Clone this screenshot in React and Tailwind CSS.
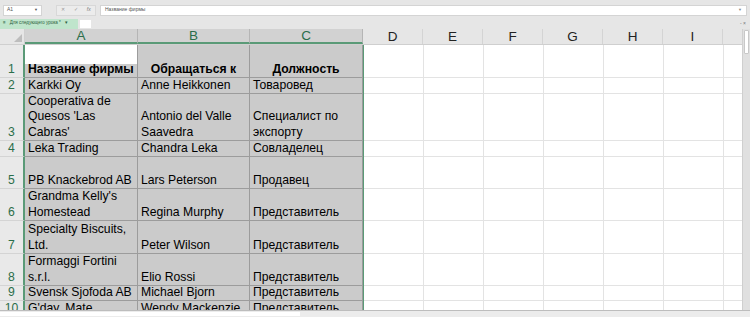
import React from "react";

const cols = [
  { key: "A", w: "w-[113px]", sel: true },
  { key: "B", w: "w-[112px]", sel: true },
  { key: "C", w: "w-[113px]", sel: true },
  { key: "D", w: "w-[60px]" },
  { key: "E", w: "w-[60px]" },
  { key: "F", w: "w-[60px]" },
  { key: "G", w: "w-[60px]" },
  { key: "H", w: "w-[60px]" },
  { key: "I", w: "w-[60px]" },
];

const rows = [
  { n: 1, h: "h-[33px]", cells: ["Название фирмы", "Обращаться к", "Должность"], head: true },
  { n: 2, h: "h-[16px]", cells: ["Karkki Oy", "Anne Heikkonen", "Товаровед"] },
  { n: 3, h: "h-[47px]", cells: [["Cooperativa de", "Quesos 'Las", "Cabras'"], ["Antonio del Valle", "Saavedra"], ["Специалист по", "экспорту"]] },
  { n: 4, h: "h-[16px]", cells: ["Leka Trading", "Chandra Leka", "Совладелец"] },
  { n: 5, h: "h-[32px]", cells: ["PB Knackebrod AB", "Lars Peterson", "Продавец"] },
  { n: 6, h: "h-[32px]", cells: [["Grandma Kelly's", "Homestead"], "Regina Murphy", "Представитель"] },
  { n: 7, h: "h-[33px]", cells: [["Specialty Biscuits,", "Ltd."], "Peter Wilson", "Представитель"] },
  { n: 8, h: "h-[32px]", cells: [["Formaggi Fortini", "s.r.l."], "Elio Rossi", "Представитель"] },
  { n: 9, h: "h-[15px]", cells: ["Svensk Sjofoda AB", "Michael Bjorn", "Представитель"] },
  { n: 10, h: "h-[32px]", cells: [["G'day, Mate"], ["Wendy Mackenzie"], ["Представитель"]], top: true },
];

const Cell = ({ value, col, head, top }) => {
  const lines = Array.isArray(value) ? value : [value];
  const align = head && col > 0 ? "items-center" : "items-start";
  return (
    <div
      className={`${cols[col].w} shrink-0 relative flex flex-col ${top ? "justify-start" : "justify-end"} ${align} px-[3px] bg-[#cbcbcb] border-r border-b border-[#9c9c9c] overflow-hidden`}
    >
      {head && col === 0 && <div className="absolute left-0 right-0 top-0 h-[19px] bg-white" />}
      {lines.map((l, i) => (
        <div key={i} className={`relative leading-[15.5px] whitespace-nowrap ${head ? "font-bold" : ""}`}>
          {l}
        </div>
      ))}
    </div>
  );
};

export default function App() {
  return (
    <div className="w-[750px] h-[317px] overflow-hidden bg-[#e6e6e6] text-[12.2px] text-black" style={{ fontFamily: "'Liberation Sans', Arial, sans-serif" }}>
      {/* formula bar */}
      <div className="h-[18px] flex items-center gap-[4px] px-[3px] pt-[2px] text-[5px] text-[#555]">
        <div className="w-[39px] h-[11px] bg-white border border-[#d4d4d4] flex items-center justify-between px-[3px]">
          <span>A1</span>
          <span className="text-[4px]">▼</span>
        </div>
        <div className="w-[6px]" />
        <div className="w-[40px] h-[11px] bg-[#ececec] border border-[#d8d8d8] flex items-center justify-around text-[#999]">
          <span>✕</span>
          <span>✓</span>
          <span className="italic text-[#777]">fx</span>
        </div>
        <div className="flex-1 h-[11px] bg-white border border-[#d4d4d4] flex items-center px-[4px] justify-between">
          <span>Название фирмы</span>
          <span className="text-[4px] text-[#888]">▼</span>
        </div>
      </div>
      {/* sheet tabs */}
      <div className="h-[11px] flex items-center gap-[2px] relative">
        <div className="w-[78px] h-[10px] bg-[#bfe5cc] flex items-center gap-[4px] px-[3px] text-[4.5px] text-[#2d5d3c] whitespace-nowrap">
          <span>≡</span>
          <span>Для следующего урока *</span>
          <span>▾</span>
        </div>
        <div className="w-[11px] h-[8px] bg-white" />
        <div className="absolute right-[4px] top-[2px] text-[5px] text-[#777]">- ×</div>
      </div>
      {/* grid */}
      <div className="flex h-[281px] overflow-hidden">
        <div className="w-[742px] bg-white">
          {/* column headers */}
          <div className="flex h-[16px] bg-[#e6e6e6] border-b border-[#cfcfcf]">
            <div className="w-[25px] shrink-0 border-r border-[#cfcfcf] relative overflow-hidden">
              <div className="absolute right-[2px] bottom-[2px] w-0 h-0 border-l-[8px] border-l-transparent border-b-[8px] border-b-[#bdbdbd]" />
            </div>
            {cols.map((c) => (
              <div
                key={c.key}
                className={`${c.w} shrink-0 flex items-center justify-center border-r ${c.sel ? "bg-[#d2d2d2] text-[#2b6e4a] border-[#b5b5b5] border-b-2 border-b-[#5a9a77]" : "text-[#222] border-[#d4d4d4]"} text-[13.5px] leading-[14px]`}
              >
                {c.key}
              </div>
            ))}
            <div className="flex-1" />
          </div>
          {rows.map((r) => (
            <div key={r.n} className={`flex ${r.h}`}>
              <div className={`w-[25px] shrink-0 bg-[#e9e9e9] border-r-2 border-r-[#5a9a77] border-b border-b-[#d4d4d4] flex ${r.top ? "items-start" : "items-end"} justify-center text-[#2b6e4a] leading-[15.5px]`}>
                {r.n}
              </div>
              {r.cells.map((v, i) => (
                <Cell key={i} value={v} col={i} head={r.head} top={r.top} />
              ))}
              <div className="border-l border-[#5a9a77]" />
              {cols.slice(3).map((c) => (
                <div key={c.key} className={`${c.w} shrink-0 border-r border-b border-[#e3e3e3]`} />
              ))}
              <div className="flex-1 border-b border-[#e3e3e3]" />
            </div>
          ))}
        </div>
        <div className="w-[8px] bg-[#e0e0e0] border-l border-[#cfcfcf] flex flex-col items-center pt-[1px]">
          <div className="w-[5px] h-[24px] bg-white border border-[#c8c8c8] rounded-[1px]" />
        </div>
      </div>
      {/* bottom bar */}
      <div className="h-[7px] border-t border-[#bdbdbd] bg-[#ececec] flex">
        <div className="w-[300px] h-[4px] mt-[1px] bg-white" />
      </div>
    </div>
  );
}
